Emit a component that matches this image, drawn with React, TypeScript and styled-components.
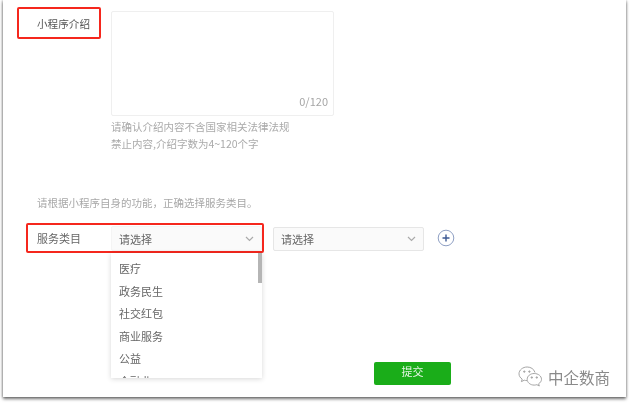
import React from 'react';
import styled, { createGlobalStyle } from 'styled-components';

const GlobalStyle = createGlobalStyle`
  html, body {
    margin: 0;
    padding: 0;
    background: #fff;
  }
  * {
    box-sizing: border-box;
  }
`;

const Page = styled.div`
  position: relative;
  width: 631px;
  height: 406px;
  overflow: hidden;
  background: #fff;
  font-family: 'Noto Sans CJK SC', 'Liberation Sans', sans-serif;
  filter: blur(0.55px);
`;
const Card = styled.div`
  position: relative;
  margin-left: 3px;
  width: 623px;
  height: 397px;
  padding-top: 7px;
  background: #fff;
  box-shadow: 0 2px 3px rgba(0, 0, 0, 0.55), -1px 0 2px rgba(0, 0, 0, 0.18), 1px 0 2px rgba(0, 0, 0, 0.12);
`;
const IntroRow = styled.div`
  display: flex;
  align-items: flex-start;
  padding-left: 14px;
`;
const IntroLabel = styled.div`
  width: 84px;
  height: 32px;
  margin-right: 10px;
  padding: 7px 9px 0 0;
  border: 2px solid #f5271d;
  border-radius: 2px;
  font-size: 10.6px;
  line-height: 16px;
  text-align: right;
  color: #555;
`;
const IntroField = styled.div`
  padding-top: 4px;
`;
const TextArea = styled.div`
  display: flex;
  align-items: flex-end;
  justify-content: flex-end;
  width: 223px;
  height: 105px;
  padding: 0 5px 7px 0;
  border: 1px solid #efefef;
  border-radius: 2px;
  font-size: 11px;
  line-height: 14px;
  color: #a6a6a6;
`;
const HelpText = styled.div`
  margin-top: 2px;
  font-size: 10.5px;
  line-height: 17px;
  color: #aaa;
`;
const Hint = styled.div`
  margin: 43px 0 0 34px;
  font-size: 10.5px;
  line-height: 16px;
  color: #a8a8a8;
`;
const ServiceRow = styled.div`
  display: flex;
  align-items: center;
  margin: 12px 0 0 23px;
`;
const ServiceBox = styled.div`
  position: relative;
  display: flex;
  align-items: center;
  width: 238px;
  height: 30px;
  padding-left: 9px;
  border: 2px solid #f5271d;
  border-radius: 2px;
`;
const ServiceLabel = styled.div`
  width: 74px;
  font-size: 11px;
  line-height: 16px;
  color: #666;
`;
const Select = styled.div<{ $outlined?: boolean }>`
  display: flex;
  align-items: center;
  justify-content: space-between;
  width: 151px;
  height: ${(p) => (p.$outlined ? '24px' : '25px')};
  margin-top: 1px;
  padding: 0 7px 0 7px;
  border: 1px solid ${(p) => (p.$outlined ? '#e6e6e6' : '#f4f4f4')};
  border-radius: 2px;
  background: #fafafa;
  font-size: 11px;
  color: #666;
`;
const SecondSelect = styled(Select)`
  margin-left: 9px;
`;
const Menu = styled.div`
  position: absolute;
  top: 28px;
  left: 83px;
  width: 151px;
  height: 125px;
  padding-top: 5px;
  overflow: hidden;
  background: #fff;
  box-shadow: 0 1px 5px rgba(0, 0, 0, 0.16);
`;
const MenuItem = styled.div`
  height: 22.6px;
  padding-left: 8px;
  font-size: 11px;
  line-height: 21px;
  color: #666;
`;
const ScrollThumb = styled.div`
  position: absolute;
  top: 0;
  right: 0;
  width: 4px;
  height: 30px;
  background: #b5b5b5;
`;
const AddButton = styled.svg`
  display: block;
  width: 18px;
  height: 18px;
  margin-left: 13px;
`;
const Footer = styled.div`
  display: flex;
  justify-content: flex-end;
  margin-top: 109px;
  padding-right: 175px;
`;
const SubmitButton = styled.div`
  width: 77px;
  height: 23px;
  border-radius: 2px;
  background: #1aad19;
  font-size: 11px;
  line-height: 19px;
  text-align: center;
  color: #e8f6e8;
`;
const Watermark = styled.div`
  position: absolute;
  right: 16px;
  bottom: 10px;
  display: flex;
  align-items: center;
  gap: 5px;
  font-size: 15.5px;
  line-height: 20px;
  color: #8a8a8a;
`;

const Chevron = () => (
  <svg width="9" height="6" viewBox="0 0 9 6" fill="none">
    <path d="M1 1l3.5 3.5L8 1" stroke="#aaa" strokeWidth="1.2" />
  </svg>
);

const menuItems = ['医疗', '政务民生', '社交红包', '商业服务', '公益', '金融业'];

export default function App() {
  return (
    <Page>
      <GlobalStyle />
      <Card>
        <IntroRow>
          <IntroLabel>小程序介绍</IntroLabel>
          <IntroField>
            <TextArea>0/120</TextArea>
            <HelpText>
              请确认介绍内容不含国家相关法律法规
              <br />
              禁止内容,介绍字数为4~120个字
            </HelpText>
          </IntroField>
        </IntroRow>
        <Hint>请根据小程序自身的功能，正确选择服务类目。</Hint>
        <ServiceRow>
          <ServiceBox>
            <ServiceLabel>服务类目</ServiceLabel>
            <Select>
              请选择
              <Chevron />
            </Select>
            <Menu>
              {menuItems.map((item) => (
                <MenuItem key={item}>{item}</MenuItem>
              ))}
              <ScrollThumb />
            </Menu>
          </ServiceBox>
          <SecondSelect $outlined>
            请选择
            <Chevron />
          </SecondSelect>
          <AddButton viewBox="0 0 18 18" fill="none">
            <circle cx="9" cy="9" r="7.8" stroke="#8fa0c4" strokeWidth="1" />
            <path d="M5.5 9h7M9 5.5v7" stroke="#3d5a94" strokeWidth="1.4" />
          </AddButton>
        </ServiceRow>
        <Footer>
          <SubmitButton>提交</SubmitButton>
        </Footer>
        <Watermark>
          <svg width="25" height="21" viewBox="0 0 25 21" fill="none" stroke="#a5a5a5" strokeWidth="1">
            <path d="M17 6.5C16 3 12.8 1 9.2 1 4.8 1 1 4 1 7.8c0 2.2 1.2 4 3.2 5.3L3.4 15.6l2.9-1.4c.9.3 1.8.4 2.7.4" />
            <path d="M16.2 7.5c-4 0-7 2.6-7 5.8s3 5.8 7 5.8c1 0 1.9-.2 2.7-.4l2.4 1.3-.7-2.2c1.7-1.1 2.9-2.7 2.9-4.5 0-3.2-3.2-5.8-7.3-5.8z" />
            <circle cx="6.3" cy="5.6" r=".7" fill="#a5a5a5" />
            <circle cx="11.4" cy="5.6" r=".7" fill="#a5a5a5" />
            <circle cx="13.8" cy="11.5" r=".7" fill="#a5a5a5" />
            <circle cx="18.8" cy="11.5" r=".7" fill="#a5a5a5" />
          </svg>
          中企数商
        </Watermark>
      </Card>
    </Page>
  );
}
